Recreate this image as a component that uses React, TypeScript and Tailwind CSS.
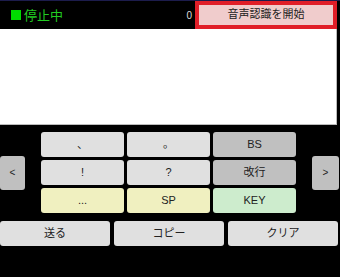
import React from "react";

const font = { fontFamily: '"Liberation Sans", "Noto Sans CJK JP", sans-serif' };

function Key({ label, cls }: { label: string; cls: string }) {
  return (
    <div
      className={`h-[25px] rounded-[3px] flex items-center justify-center text-[11px] text-[#222] ${cls}`}
    >
      {label}
    </div>
  );
}

export default function App() {
  return (
    <div className="w-[340px] h-[277px] bg-black overflow-hidden" style={font}>
      <div className="h-px bg-[#1c1c4c]" />
      <div className="h-[28px] flex items-center">
        <div className="flex items-center pl-[11px] flex-1">
          <span className="w-[10px] h-[10px] bg-[#00dd00] mr-[3px]" />
          <span className="text-[13px] leading-none text-[#22cc22]">停止中</span>
        </div>
        <span className="text-[10px] text-[#ddd] mr-[3px]">0</span>
        <div className="w-[142px] h-[28px] -mt-px border-[4px] border-[#e01e28] bg-[#f0cccc] flex items-center justify-center text-[11px] text-[#222] mr-[3px]">
          音声認識を開始
        </div>
      </div>
      <div className="w-[337px] h-[96px] bg-white border-r border-b border-[#bbb]" />
      <div className="flex items-center pt-[7px]">
        <div className="w-[25px] h-[34px] rounded-[3px] bg-[#c0c0c0] flex items-center justify-center text-[10px] text-[#222]">
          &lt;
        </div>
        <div className="ml-[16px] grid grid-cols-[83px_83px_83px] gap-[3px]">
          <Key label="、" cls="bg-[#e0e0e0]" />
          <Key label="。" cls="bg-[#e0e0e0]" />
          <Key label="BS" cls="bg-[#c0c0c0]" />
          <Key label="!" cls="bg-[#e0e0e0]" />
          <Key label="?" cls="bg-[#e0e0e0]" />
          <Key label="改行" cls="bg-[#c0c0c0]" />
          <Key label="..." cls="bg-[#f0f0c0]" />
          <Key label="SP" cls="bg-[#f0f0c0]" />
          <Key label="KEY" cls="bg-[#cdeccd]" />
        </div>
        <div className="ml-[16px] w-[27px] h-[34px] rounded-[3px] bg-[#c0c0c0] flex items-center justify-center text-[10px] text-[#222]">
          &gt;
        </div>
      </div>
      <div className="flex gap-[4px] mt-[8px]">
        <Key label="送る" cls="w-[110px] bg-[#e0e0e0]" />
        <Key label="コピー" cls="w-[110px] bg-[#e0e0e0]" />
        <Key label="クリア" cls="w-[110px] bg-[#e0e0e0]" />
      </div>
    </div>
  );
}
